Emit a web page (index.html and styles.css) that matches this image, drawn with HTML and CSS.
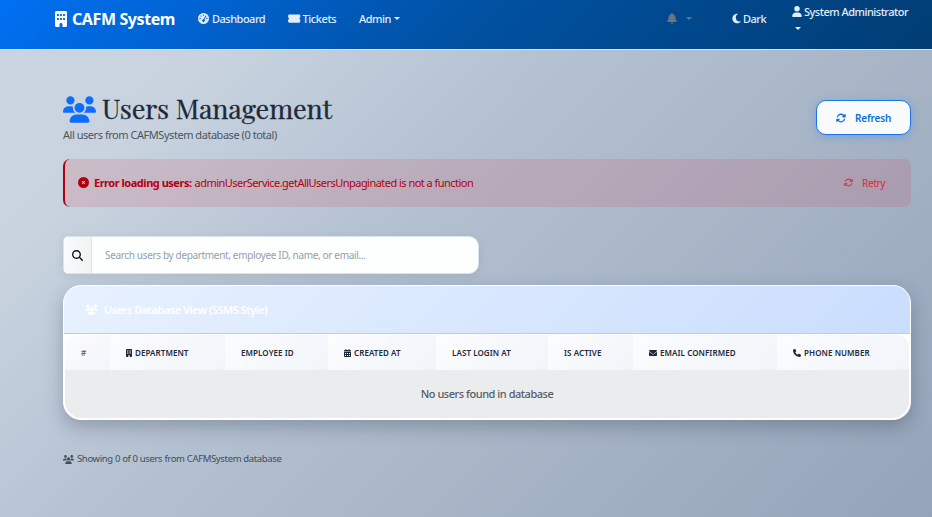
FILE: index.html
```html
<!DOCTYPE html>
<html lang="en">
<head>
<meta charset="utf-8">
<title>CAFM System</title>
<link rel="stylesheet" href="styles.css">
</head>
<body>
<svg class="sprite" aria-hidden="true">
  <symbol id="building" viewBox="0 0 384 512"><path d="M48 0C21.500 0 0 21.500 0 48V464c0 26.500 21.500 48 48 48h96V432c0-26.500 21.500-48 48-48s48 21.500 48 48v80h96c26.500 0 48-21.500 48-48V48c0-26.500-21.500-48-48-48H48zM64 240c0-8.800 7.200-16 16-16h32c8.800 0 16 7.200 16 16v32c0 8.800-7.200 16-16 16H80c-8.800 0-16-7.200-16-16V240zm112-16h32c8.800 0 16 7.200 16 16v32c0 8.800-7.200 16-16 16H176c-8.800 0-16-7.200-16-16V240c0-8.800 7.200-16 16-16zm80 16c0-8.800 7.200-16 16-16h32c8.800 0 16 7.200 16 16v32c0 8.800-7.200 16-16 16H272c-8.800 0-16-7.200-16-16V240zM80 96h32c8.800 0 16 7.200 16 16v32c0 8.800-7.200 16-16 16H80c-8.800 0-16-7.200-16-16V112c0-8.800 7.200-16 16-16zm80 16c0-8.800 7.200-16 16-16h32c8.800 0 16 7.200 16 16v32c0 8.800-7.200 16-16 16H176c-8.800 0-16-7.200-16-16V112zM272 96h32c8.800 0 16 7.200 16 16v32c0 8.800-7.200 16-16 16H272c-8.800 0-16-7.200-16-16V112c0-8.800 7.200-16 16-16z"/></symbol>
  <symbol id="gauge" viewBox="0 0 512 512"><path fill-rule="evenodd" d="M0 256a256 256 0 1 1 512 0A256 256 0 1 1 0 256zM256 64a32 32 0 1 0 0 64 32 32 0 1 0 0-64zM144 112a32 32 0 1 0 0 64 32 32 0 1 0 0-64zM96 224a32 32 0 1 0 0 64 32 32 0 1 0 0-64zM416 224a32 32 0 1 0 0 64 32 32 0 1 0 0-64zM381 118c-10-7-25-4-31 7L257 288c-36 0-65 28-65 64s29 64 64 64 64-29 64-64c0-17-7-33-18-45l87-158c6-11 2-25-8-31z"/></symbol>
  <symbol id="ticket" viewBox="0 0 576 512"><path d="M64 64C29 64 0 93 0 128v64c0 9 7 16 15 18 19 7 33 25 33 46s-14 39-33 46c-8 2-15 9-15 18v64c0 35 29 64 64 64h448c35 0 64-29 64-64v-64c0-9-7-16-15-18-19-7-33-25-33-46s14-39 33-46c8-2 15-9 15-18v-64c0-35-29-64-64-64z"/></symbol>
  <symbol id="bell" viewBox="0 0 448 512"><path d="M224 0c-17.700 0-32 14.300-32 32V51.200C119 66 64 130.600 64 208v18.800c0 47-17.300 92.400-48.500 127.600l-7.400 8.300c-8.400 9.400-10.400 22.900-5.300 34.400S19.400 416 32 416H416c12.600 0 24-7.400 29.200-18.900s3.100-25-5.300-34.400l-7.400-8.300C401.300 319.200 384 273.900 384 226.800V208c0-77.400-55-142-128-156.800V32c0-17.700-14.300-32-32-32zm45.300 493.300c12-12 18.700-28.300 18.700-45.300H160c0 17 6.700 33.300 18.700 45.300s28.300 18.700 45.300 18.700s33.300-6.700 45.300-18.700z"/></symbol>
  <symbol id="moon" viewBox="0 0 384 512"><path d="M223.500 32C100 32 0 132.300 0 256S100 480 223.500 480c60.600 0 115.500-24.200 155.800-63.400c5-4.900 6.300-12.500 3.100-18.700s-10.100-9.700-17-8.500c-9.800 1.700-19.800 2.600-30.100 2.600c-96.900 0-175.500-78.800-175.500-176c0-65.800 36-123.100 89.300-153.300c6.100-3.500 9.200-10.500 7.700-17.300s-7.300-11.900-14.300-12.500c-6.300-.5-12.600-.8-19-.8z"/></symbol>
  <symbol id="user" viewBox="0 0 448 512"><path d="M224 256A128 128 0 1 0 224 0a128 128 0 1 0 0 256zm-45.700 48C79.800 304 0 383.800 0 482.300C0 498.700 13.300 512 29.700 512H418.300c16.400 0 29.700-13.300 29.700-29.700C448 383.800 368.200 304 269.700 304H178.300z"/></symbol>
  <symbol id="users" viewBox="0 0 640 512"><path d="M144 0a80 80 0 1 1 0 160A80 80 0 1 1 144 0zM512 0a80 80 0 1 1 0 160A80 80 0 1 1 512 0zM0 298.700C0 239.800 47.800 192 106.700 192h42.700c15.900 0 31 3.500 44.600 9.700c-1.300 7.200-1.900 14.700-1.900 22.300c0 38.200 16.800 72.500 43.300 96H21.300C9.600 320 0 310.400 0 298.700zM405.300 320h-.7c26.600-23.500 43.300-57.800 43.300-96c0-7.600-.7-15-1.900-22.300c13.600-6.300 28.700-9.700 44.600-9.700h42.700C592.200 192 640 239.800 640 298.700c0 11.800-9.600 21.300-21.300 21.300H405.300zM224 224a96 96 0 1 1 192 0 96 96 0 1 1-192 0zM128 485.300C128 411.700 187.700 352 261.300 352H378.700C452.300 352 512 411.700 512 485.300c0 14.700-11.900 26.700-26.700 26.700H154.700c-14.700 0-26.700-11.900-26.700-26.700z"/></symbol>
  <symbol id="rotate" viewBox="0 0 512 512"><path d="M142.900 142.900c62.200-62.200 162.700-62.500 225.300-1L327 183c-6.900 6.900-8.900 17.200-5.200 26.200s12.500 14.800 22.200 14.800H472c13.300 0 24-10.700 24-24V72c0-9.700-5.800-18.500-14.800-22.200s-19.300-1.700-26.200 5.200L413.400 96.600c-87.600-86.500-228.700-86.200-315.800 1C73.200 122 55.600 150.700 44.800 181.400c-5.900 16.700 2.900 34.900 19.500 40.800s34.900-2.900 40.800-19.500c7.700-21.800 20.200-42.300 37.800-59.800zM16 312V440c0 9.700 5.800 18.500 14.800 22.200s19.300 1.700 26.200-5.200l41.600-41.600c87.600 86.500 228.700 86.200 315.800-1c24.400-24.400 42.100-53.100 52.900-83.700c5.900-16.700-2.900-34.900-19.500-40.800s-34.900 2.900-40.800 19.500c-7.700 21.800-20.200 42.300-37.800 59.800c-62.200 62.200-162.700 62.500-225.300 1L185 329c6.900-6.900 8.900-17.200 5.200-26.200s-12.500-14.800-22.200-14.800H40c-13.300 0-24 10.700-24 24z"/></symbol>
  <symbol id="xmark" viewBox="0 0 512 512"><path fill-rule="evenodd" d="M256 0a256 256 0 1 0 0 512 256 256 0 1 0 0-512zM175 209l34-34 47 47 47-47 34 34-47 47 47 47-34 34-47-47-47 47-34-34 47-47z"/></symbol>
  <symbol id="search" viewBox="0 0 512 512"><path d="M416 208c0 45.900-14.900 88.300-40 122.700L502.600 457.400c12.500 12.500 12.500 32.800 0 45.300s-32.800 12.500-45.300 0L330.700 376c-34.400 25.200-76.800 40-122.700 40C93.100 416 0 322.900 0 208S93.100 0 208 0S416 93.100 416 208zM208 352a144 144 0 1 0 0-288 144 144 0 1 0 0 288z"/></symbol>
  <symbol id="calendar" viewBox="0 0 448 512"><path fill-rule="evenodd" d="M96 32a32 32 0 0 1 64 0v32h128V32a32 32 0 0 1 64 0v32h48c26 0 48 22 48 48v48H0v-48c0-26 22-48 48-48h48zM0 192h448v272c0 26-22 48-48 48H48c-26 0-48-22-48-48zM64 256v64h64v-64zm128 0v64h64v-64zm128 0v64h64v-64zM64 384v64h64v-64zm128 0v64h64v-64zm128 0v64h64v-64z"/></symbol>
  <symbol id="envelope" viewBox="0 0 512 512"><path d="M48 64C21.500 64 0 85.500 0 112c0 15.100 7.100 29.300 19.200 38.400L236.800 313.600c11.400 8.500 27 8.500 38.400 0L492.800 150.400c12.100-9.100 19.200-23.300 19.200-38.400c0-26.500-21.500-48-48-48H48zM0 176V384c0 35.300 28.700 64 64 64H448c35.300 0 64-28.700 64-64V176L294.400 339.200c-22.800 17.100-54 17.100-76.800 0L0 176z"/></symbol>
  <symbol id="phone" viewBox="0 0 512 512"><path d="M164.900 24.600c-7.700-18.600-28-28.500-47.400-23.200l-88 24C12.100 30.200 0 46 0 64C0 311.400 200.600 512 448 512c18 0 33.800-12.100 38.600-29.500l24-88c5.300-19.400-4.600-39.700-23.200-47.400l-96-40c-16.300-6.800-35.200-2.100-46.300 11.600L304.700 368C234.300 334.700 177.300 277.700 144 207.300L193.300 167c13.700-11.200 18.400-30 11.600-46.300l-40-96z"/></symbol>
</svg>

<nav class="navbar">
  <a class="brand"><svg class="icon icon-brand"><use href="#building"/></svg><span>CAFM System</span></a>
  <a class="nav-link dashboard"><svg class="icon icon-11"><use href="#gauge"/></svg><span>Dashboard</span></a>
  <a class="nav-link tickets"><svg class="icon icon-ticket"><use href="#ticket"/></svg><span>Tickets</span></a>
  <a class="nav-link admin"><span>Admin</span><i class="caret"></i></a>
  <a class="nav-link bell"><svg class="icon icon-bell"><use href="#bell"/></svg><i class="caret"></i></a>
  <a class="nav-link dark"><svg class="icon icon-moon"><use href="#moon"/></svg><span>Dark</span></a>
  <a class="nav-link account"><span class="account-name"><svg class="icon icon-user"><use href="#user"/></svg><span>System Administrator</span></span><i class="caret"></i></a>
</nav>

<main class="page">
  <header class="page-head">
    <div>
      <h1><svg class="icon icon-title"><use href="#users"/></svg><span>Users Management</span></h1>
      <p class="subtitle">All users from CAFMSystem database (0 total)</p>
    </div>
    <button class="btn-refresh"><svg class="icon icon-rotate"><use href="#rotate"/></svg><span>Refresh</span></button>
  </header>

  <div class="alert">
    <svg class="icon icon-11"><use href="#xmark"/></svg>
    <strong>Error loading users:</strong>
    <span class="message">adminUserService.getAllUsersUnpaginated is not a function</span>
    <button class="btn-retry"><svg class="icon icon-retry"><use href="#rotate"/></svg><span>Retry</span></button>
  </div>

  <div class="search">
    <span class="search-icon"><svg class="icon icon-11"><use href="#search"/></svg></span>
    <input type="text" placeholder="Search users by department, employee ID, name, or email...">
  </div>

  <section class="card">
    <div class="card-head"><svg class="icon icon-card"><use href="#users"/></svg><span>Users Database View (SSMS Style)</span></div>
    <div class="table-wrap">
      <table>
        <colgroup><col class="c1"><col class="c2"><col class="c3"><col class="c4"><col class="c5"><col class="c6"><col class="c7"><col class="c8"></colgroup>
        <thead><tr>
          <th><span class="hash">#</span></th>
          <th><svg class="icon icon-th-building"><use href="#building"/></svg><span>Department</span></th>
          <th><span>Employee ID</span></th>
          <th><svg class="icon icon-th-cal"><use href="#calendar"/></svg><span>Created At</span></th>
          <th><span>Last Login At</span></th>
          <th><span>Is Active</span></th>
          <th><svg class="icon icon-th"><use href="#envelope"/></svg><span>Email Confirmed</span></th>
          <th><svg class="icon icon-th"><use href="#phone"/></svg><span>Phone Number</span></th>
        </tr></thead>
        <tbody><tr><td colspan="8">No users found in database</td></tr></tbody>
      </table>
    </div>
  </section>

  <footer class="summary"><svg class="icon icon-foot"><use href="#users"/></svg><span>Showing 0 of 0 users from CAFMSystem database</span></footer>
</main>
</body>
</html>
```
FILE: styles.css
```css
* { box-sizing: border-box; }
body {
  margin: 0;
  height: 517px;
  overflow: hidden;
  font-family: "Noto Sans", "Open Sans", sans-serif;
  font-size: 11px;
  color: #1e293b;
  background: linear-gradient(135deg, #cbd5e1 0%, #c8d3df 18%, #b4c1d1 42%, #94a3b8 100%);
  white-space: nowrap;
}
.sprite { display: none; }
.icon { display: block; flex: none; fill: currentColor; }
.icon-11 { width: 11px; height: 11px; }
button { font-family: inherit; display: flex; align-items: center; }

.navbar {
  height: 50px;
  display: flex;
  padding: 0 0 12px 55px;
  align-items: center;
  color: #e2edfb;
  background: linear-gradient(135deg, #0070f3 0%, #0051a2 50%, #003d73 100%);
  border-bottom: 1px solid #d9e6f2;
}
.navbar a { display: flex; align-items: center; flex: none; }
.brand { width: 143px; gap: 5px; color: #fff; font-size: 16px; font-weight: 700; letter-spacing: -.4px; }
.icon-brand { width: 12px; height: 16px; }
.nav-link { font-weight: 500; font-size: 11px; letter-spacing: -.5px; }
.dashboard { width: 90px; gap: 3px; }
.tickets { width: 71px; gap: 2px; letter-spacing: -.4px; }
.icon-ticket { width: 12.500px; height: 11px; }
.admin { width: 308px; gap: 3px; }
.caret { border: 3px solid transparent; border-top-color: currentColor; border-bottom: 0; }
.bell { width: 65px; gap: 9px; color: #6c757d; }
.icon-bell { width: 10px; height: 11px; }
.dark { width: 60px; gap: 2px; }
.icon-moon { width: 9px; height: 11px; }
.navbar .account { flex-direction: column; align-items: flex-start; gap: 8px; height: 28px; }
.account-name { display: flex; align-items: center; gap: 2px; line-height: 14px; }
.icon-user { width: 10px; height: 11px; }
.account .caret { margin-left: 3px; }

.page { padding: 42px 21px 0 63px; }
.page-head { display: flex; justify-content: space-between; align-items: flex-start; height: 67px; }
h1 {
  display: flex;
  align-items: center;
  gap: 6px;
  margin: 0;
  height: 35px;
  font: 400 27px/31px "Playfair Display", "Liberation Serif", serif;
  letter-spacing: -.1px;
  -webkit-text-stroke: .3px currentColor;
}
h1 span { padding-bottom: 3px; }
.icon-title { width: 33px; height: 27px; color: #0d6efd; }
.subtitle { margin: 0; line-height: 16px; color: #4b5563; letter-spacing: -.46px; }
.btn-refresh {
  width: 95px;
  height: 35px;
  margin-top: 8px;
  padding: 0 0 0 19px;
  gap: 9px;
  border: 1.500px solid #1976e8;
  border-radius: 10px;
  background: #f8fafc;
  color: #0d6fd6;
  font-size: 10px;
  font-weight: 600;
  letter-spacing: -.15px;
  box-shadow: 0 2px 8px #1976e84d;
}
.icon-rotate { width: 10px; height: 10px; }
.alert {
  display: flex;
  align-items: center;
  height: 48px;
  padding: 0 26px 1px 13px;
  border-left: 2px solid #b30010;
  border-radius: 7px;
  background: #dc354526;
  color: #b30010;
}
.alert strong { margin: 0 3px 0 5px; letter-spacing: -.48px; }
.message { letter-spacing: -.53px; }
.btn-retry { margin-left: auto; padding: 0; gap: 9px; border: 0; background: none; color: #dc3545; font-size: 10px; font-weight: 500; letter-spacing: -.5px; }
.icon-retry { width: 9px; height: 9px; }
.search {
  display: flex;
  width: 416px;
  height: 38px;
  margin-top: 29px;
  border: 1px solid #dde3ea;
  border-radius: 5px 10px 10px 5px;
  background: #fdfefe;
  box-shadow: 0 2px 8px #00000014;
  overflow: hidden;
}
.search-icon { width: 28px; display: flex; align-items: center; justify-content: center; background: linear-gradient(90deg, #f8fafc, #f1f3f5); border-right: 1px solid #dde1e6; color: #111; }
.search input { flex: 1; border: 0; padding: 0 13px; background: none; font: 10px "Noto Sans", sans-serif; letter-spacing: -.34px; outline: 0; }
.search input::placeholder { color: #94a0ad; }

.card {
  height: 135px;
  margin-top: 11px;
  border: 1px solid #fff;
  border-radius: 18px;
  background: #fff;
  overflow: hidden;
  box-shadow: 0 7px 18px #1e293b45;
}
.card-head {
  display: flex;
  align-items: center;
  gap: 6px;
  height: 48px;
  padding-left: 21px;
  border-bottom: 1px solid #b3cef5;
  background: linear-gradient(135deg, #e7f1ff, #c9ddfd);
  color: #fff;
  font-weight: 600;
  letter-spacing: -.5px;
}
.icon-card { width: 13px; height: 11px; }
.table-wrap { margin: 1px 1px 0; border-radius: 12px 12px 17px 17px; overflow: hidden; }
table { width: 844px; border-collapse: collapse; table-layout: fixed; }
.c1 { width: 45px; }
.c2 { width: 115px; }
.c3 { width: 103px; }
.c4 { width: 108px; }
.c5 { width: 112px; }
.c6 { width: 85px; }
.c7 { width: 144px; }
.c8 { width: 132px; }
th {
  height: 35px;
  padding: 0 0 0 16px;
  text-align: left;
  font-size: 8px;
  font-weight: 600;
  letter-spacing: .08px;
  text-transform: uppercase;
  background: linear-gradient(135deg, #fbfcfe, #f1f5f9);
  vertical-align: middle;
}
th .icon { display: inline-block; vertical-align: -1px; margin-right: 3px; }
.hash { color: #64707d; }
.icon-th-building { width: 6px; height: 8px; }
.icon-th-cal { width: 7px; height: 8px; }
.icon-th { width: 8px; height: 8px; }
td { height: 48px; padding: 0 0 1px; text-align: center; background: #ebecee; color: #555d66; font-weight: 500; letter-spacing: -.47px; }
.summary { display: flex; align-items: center; gap: 3px; margin-top: 31px; line-height: 16px; font-size: 9.500px; color: #434d59; letter-spacing: -.35px; }
.icon-foot { width: 11px; height: 9px; }
```
